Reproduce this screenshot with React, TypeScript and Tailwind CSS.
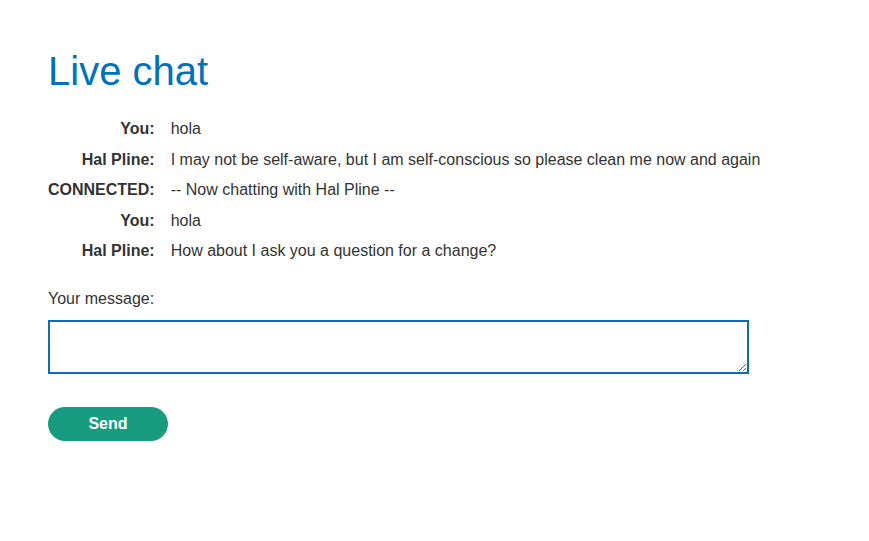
import { useEffect, useRef } from 'react';

const messages = [
  { who: 'You:', text: 'hola' },
  { who: 'Hal Pline:', text: 'I may not be self-aware, but I am self-conscious so please clean me now and again' },
  { who: 'CONNECTED:', text: '-- Now chatting with Hal Pline --' },
  { who: 'You:', text: 'hola' },
  { who: 'Hal Pline:', text: 'How about I ask you a question for a change?' },
];

export default function App() {
  const ref = useRef<HTMLTextAreaElement>(null);

  useEffect(() => {
    ref.current?.focus();
  }, []);

  return (
    <div className="min-h-screen bg-white px-12 pt-[47px] text-[16px] text-[#333] font-['Liberation_Sans',Arial,sans-serif]">
      <h1 className="text-[40px] leading-[48px] text-[#0071bc]">Live chat</h1>

      <div className="mt-[19px] grid grid-cols-[auto_1fr] gap-x-4">
        {messages.map((m, i) => (
          <div key={i} className="contents">
            <div className="h-[30.5px] flex items-center justify-end font-bold">{m.who}</div>
            <div className="h-[30.5px] flex items-center">{m.text}</div>
          </div>
        ))}
      </div>

      <label className="mt-[22px] block leading-5">Your message:</label>
      <textarea
        ref={ref}
        className="mt-[11px] block h-[54px] w-[701px] border-2 border-[#0a6ebd] px-[6px] py-1 outline-none"
      />

      <button className="mt-[33px] h-[34px] w-[120px] rounded-full bg-[#179c80] text-base font-bold text-white">
        Send
      </button>
    </div>
  );
}
